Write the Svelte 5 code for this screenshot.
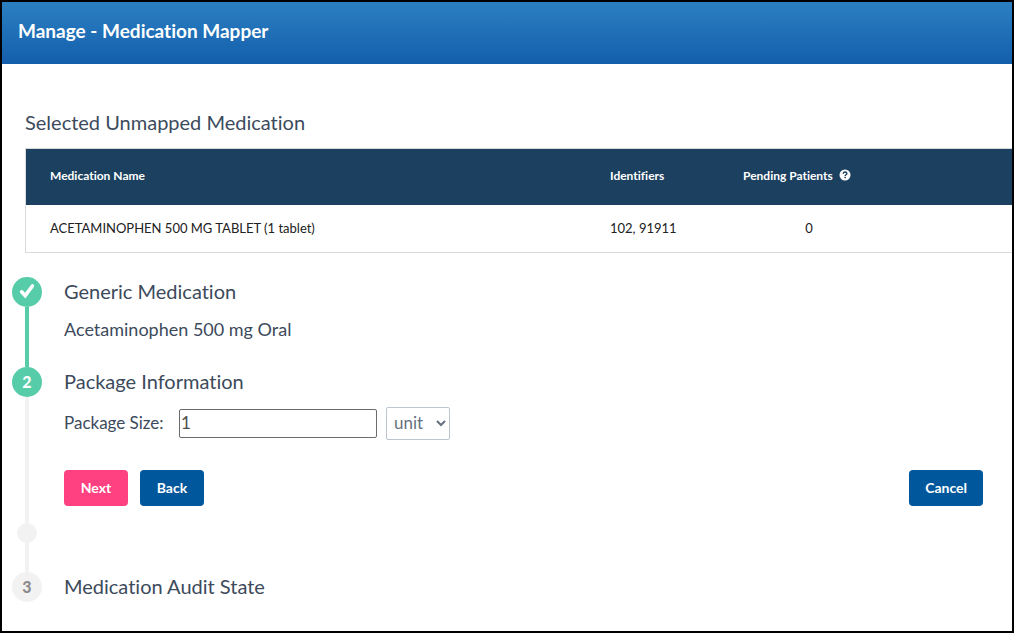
<script lang="ts">
  interface Medication {
    name: string;
    identifiers: string[];
    pending: number;
  }

  const medications: Medication[] = [
    { name: "ACETAMINOPHEN 500 MG TABLET (1 tablet)", identifiers: ["102", "91911"], pending: 0 },
  ];

  let packageSize = $state("1");
  let packageUnit = $state("unit");
</script>

<div class="page">
  <header class="page-header">
    <h1>Manage - Medication Mapper</h1>
  </header>

  <main>
    <section class="selected">
      <h2>Selected Unmapped Medication</h2>
      <table>
        <thead>
          <tr>
            <th class="col-name">Medication Name</th>
            <th class="col-ids">Identifiers</th>
            <th class="col-pending">
              <span class="with-help">
                Pending Patients
                <svg class="help" viewBox="0 0 12 12" aria-hidden="true">
                  <circle cx="6" cy="6" r="5.5" fill="#fff" />
                  <path
                    d="M4.2 4.7C4.3 3.5 5.1 3 6.1 3s1.8.6 1.8 1.5c0 1.2-1.7 1.2-1.7 2.4"
                    fill="none"
                    stroke="#1b4060"
                    stroke-width="1.4"
                  />
                  <rect x="5.4" y="7.8" width="1.5" height="1.4" fill="#1b4060" />
                </svg>
              </span>
            </th>
            <th class="col-rest"></th>
          </tr>
        </thead>
        <tbody>
          {#each medications as med}
            <tr>
              <td>{med.name}</td>
              <td>{med.identifiers.join(", ")}</td>
              <td class="pending">{med.pending}</td>
              <td></td>
            </tr>
          {/each}
        </tbody>
      </table>
    </section>

    <ol class="steps">
      <li class="step">
        <div class="rail done">
          <span class="marker">
            <svg class="check" viewBox="0 0 16 16" aria-hidden="true">
              <path d="M2.6 8.8 6.2 12.6 13.4 3" fill="none" stroke="#fff" stroke-width="3.6" stroke-linecap="round" />
            </svg>
          </span>
          <span class="line"></span>
        </div>
        <div class="content">
          <h2>Generic Medication</h2>
          <p class="summary">Acetaminophen 500 mg Oral</p>
        </div>
      </li>

      <li class="step">
        <div class="rail active">
          <span class="marker">2</span>
          <span class="line"></span>
        </div>
        <div class="content">
          <h2>Package Information</h2>
          <form onsubmit={(e) => e.preventDefault()}>
            <div class="field">
              <label for="package-size">Package Size:</label>
              <input id="package-size" type="text" bind:value={packageSize} />
              <select aria-label="Package unit" bind:value={packageUnit}>
                <option value="unit">unit</option>
                <option value="mL">mL</option>
              </select>
            </div>
            <div class="actions">
              <button type="submit" class="btn next">Next</button>
              <button type="button" class="btn">Back</button>
              <button type="button" class="btn cancel">Cancel</button>
            </div>
          </form>
        </div>
      </li>

      <li class="step spacer" aria-hidden="true">
        <div class="rail">
          <span class="dot"></span>
          <span class="line"></span>
        </div>
      </li>

      <li class="step">
        <div class="rail">
          <span class="marker">3</span>
        </div>
        <div class="content">
          <h2>Medication Audit State</h2>
        </div>
      </li>
    </ol>
  </main>
</div>

<style>
  :global(body) {
    margin: 0;
  }

  .page {
    box-sizing: border-box;
    min-height: 100vh;
    border: 2px solid #000;
    background: #fff;
    color: #3c4a5c;
    font-family: Lato, "Liberation Sans", sans-serif;
    font-variant-ligatures: none;
  }

  .page-header {
    display: flex;
    align-items: center;
    height: 62px;
    padding: 0 16px;
    background: linear-gradient(#2b80c1, #145eac);
  }

  h1 {
    margin: 0 0 4px;
    color: #fff;
    font-size: 19px;
    font-weight: 700;
    line-height: 24px;
  }

  h2 {
    margin: 0;
    padding-bottom: 2px;
    font-size: 20px;
    font-weight: 400;
    line-height: 28px;
  }

  .selected {
    padding: 44px 0 0 23px;
  }

  table {
    width: 100%;
    margin-top: 10px;
    border: 1px solid #d9d9d9;
    border-right: 0;
    border-spacing: 0;
    table-layout: fixed;
  }

  th,
  td {
    box-sizing: border-box;
    padding: 0 24px 2px;
    text-align: left;
    white-space: nowrap;
  }

  th {
    height: 56px;
    padding-bottom: 4px;
    background: #1b4060;
    color: #fff;
    font-size: 12px;
    font-weight: 700;
  }

  td {
    height: 47px;
    color: #212121;
    font-size: 13px;
  }

  .col-ids {
    width: 133px;
  }

  .col-pending {
    width: 180px;
  }

  .col-rest {
    width: 113px;
  }

  .pending {
    text-align: center;
  }

  .with-help {
    display: flex;
    align-items: center;
    gap: 6px;
  }

  .help {
    width: 12px;
    height: 12px;
  }

  .steps {
    margin: 24px 0 0;
    padding: 0 29px 29px 10px;
    list-style: none;
  }

  .step {
    display: flex;
    gap: 22px;
  }

  .rail {
    display: flex;
    flex: none;
    flex-direction: column;
    align-items: center;
    width: 30px;
  }

  .marker {
    display: flex;
    align-items: center;
    justify-content: center;
    box-sizing: border-box;
    width: 30px;
    height: 30px;
    padding-bottom: 2px;
    border-radius: 50%;
    background: #f2f2f2;
    color: #8c8c8c;
    font-size: 16px;
    font-weight: 900;
  }

  .done .marker,
  .active .marker {
    background: #57cca8;
    color: #fff;
  }

  .check {
    width: 16px;
    height: 16px;
  }

  .line {
    flex: 1;
    width: 4px;
    background: #f2f2f2;
  }

  .done .line {
    background: #57cca8;
  }

  .dot {
    width: 20px;
    height: 20px;
    border-radius: 50%;
    background: #f2f2f2;
  }

  .spacer {
    height: 49px;
  }

  .content {
    flex: 1;
  }

  .summary {
    margin: 10px 0 26px;
    font-size: 18px;
    line-height: 24px;
  }

  .field {
    display: flex;
    align-items: center;
    margin-top: 10px;
  }

  label {
    width: 115px;
    padding-bottom: 2px;
    font-size: 17px;
    line-height: 20px;
  }

  input {
    box-sizing: border-box;
    width: 198px;
    height: 29px;
    margin-right: 9px;
    padding: 0 1px 2px;
    border: 1px solid #6b6b6b;
    border-radius: 2px;
    background: #fff;
    color: #4c4c4c;
    font-family: inherit;
    font-size: 17px;
  }

  select {
    box-sizing: border-box;
    width: 64px;
    height: 33px;
    padding: 0 0 2px 3px;
    border: 1px solid #bcc6d0;
    border-radius: 2px;
    background: #fff;
    color: #66717f;
    font-family: inherit;
    font-size: 17px;
  }

  .actions {
    display: flex;
    gap: 12px;
    padding: 30px 0 17px;
  }

  .btn {
    min-width: 64px;
    height: 36px;
    padding: 0 16px 2px;
    border: 0;
    border-radius: 4px;
    background: #00579c;
    color: #fff;
    font-family: inherit;
    font-size: 14px;
    font-weight: 700;
    cursor: pointer;
  }

  .next {
    background: #ff4081;
  }

  .cancel {
    margin-left: auto;
  }
</style>
